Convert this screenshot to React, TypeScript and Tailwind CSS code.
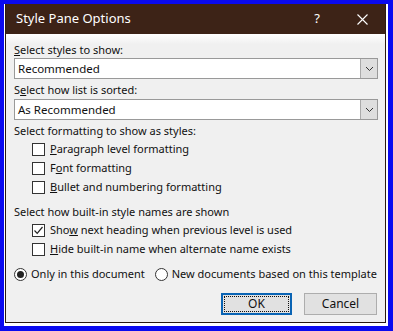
import React from 'react';

const Check = ({ checked, label, keyIdx }: { checked?: boolean; label: string; keyIdx: number }) => (
  <div className="flex items-center h-[19px] pl-[18px]">
    <div className="w-[13px] h-[13px] border border-[#333] bg-white flex items-center justify-center">
      {checked && (
        <svg width="11" height="11" viewBox="0 0 11 11">
          <path d="M1.5 5.5 L4.2 8.3 L9.5 2" fill="none" stroke="#222" strokeWidth="1.2" />
        </svg>
      )}
    </div>
    <span className="ml-[5px]">
      {label.slice(0, keyIdx)}
      <span className="underline">{label[keyIdx]}</span>
      {label.slice(keyIdx + 1)}
    </span>
  </div>
);

const Select = ({ value }: { value: string }) => (
  <div className="flex h-[21px] border border-[#999] bg-white">
    <div className="flex-1 flex items-center pl-[3px] text-[11.5px]">{value}</div>
    <div className="w-[17px] bg-[#dedede] border-l border-[#aaa] flex items-center justify-center">
      <svg width="9" height="6" viewBox="0 0 9 6">
        <path d="M1 1 L4.5 4.5 L8 1" fill="none" stroke="#333" strokeWidth="1" />
      </svg>
    </div>
  </div>
);

const Radio = ({ on, label }: { on?: boolean; label: string }) => (
  <div className="flex items-center whitespace-nowrap">
    <div className="w-[13px] h-[13px] rounded-full border border-[#333] bg-white flex items-center justify-center">
      {on && <div className="w-[7px] h-[7px] rounded-full bg-[#222]" />}
    </div>
    <span className="ml-[4px]">{label}</span>
  </div>
);

export default function App() {
  return (
    <div className="w-[393px] h-[331px] bg-[#0a0af0] pt-[4px] pl-[4px] pr-[5px] pb-[5px]">
      <div className="w-full h-full bg-white pl-px pr-[2px] pb-[3px]">
        <div
          className="w-full h-full border border-[#2b1a10] border-t-0 bg-[#f0f0f0] flex flex-col text-[11px] text-[#111]"
          style={{ fontFamily: '"Noto Sans", "Open Sans", sans-serif' }}
        >
          <div className="h-[30px] bg-[#3d2317] text-white flex items-center pl-[10px] pr-[17px] text-[13px]">
            <span className="flex-1">Style Pane Options</span>
            <span className="mr-[37px]">?</span>
            <svg width="11" height="11" viewBox="0 0 11 11">
              <path d="M0.5 0.5 L10.5 10.5 M10.5 0.5 L0.5 10.5" stroke="#fff" strokeWidth="1.1" />
            </svg>
          </div>
          <div className="flex-1 bg-gradient-to-b from-white to-[#f0f0f0] bg-[length:100%_10px] bg-no-repeat pl-[8px] pr-[7px] pt-[7px]">
            <div className="h-[17px] leading-[17px]"><span className="underline">S</span>elect styles to show:</div>
            <Select value="Recommended" />
            <div className="h-[19px] leading-[19px] mt-px">S<span className="underline">e</span>lect how list is sorted:</div>
            <Select value="As Recommended" />
            <div className="h-[19px] leading-[19px] mt-px">Select formatting to show as styles:</div>
            <Check label="Paragraph level formatting" keyIdx={0} />
            <Check label="Font formatting" keyIdx={1} />
            <Check label="Bullet and numbering formatting" keyIdx={0} />
            <div className="h-[18px] leading-[18px] mt-[6px]">Select how built-in style names are shown</div>
            <Check checked label="Show next heading when previous level is used" keyIdx={3} />
            <Check label="Hide built-in name when alternate name exists" keyIdx={0} />
            <div className="flex gap-[10px] mt-[6px] h-[19px]">
              <Radio on label="Only in this document" />
              <Radio label="New documents based on this template" />
            </div>
            <div className="flex justify-end gap-[12px] mt-[9px] pr-[1px]">
              <div className="w-[71px] h-[22px] border-2 border-[#0a64b4] bg-[#e1e1e1] p-px">
                <div className="w-full h-full border border-dotted border-[#111] flex items-center justify-center text-[12px]">OK</div>
              </div>
              <div className="w-[73px] h-[22px] border border-[#adadad] bg-[#e1e1e1] flex items-center justify-center text-[12px]">Cancel</div>
            </div>
          </div>
        </div>
      </div>
    </div>
  );
}
